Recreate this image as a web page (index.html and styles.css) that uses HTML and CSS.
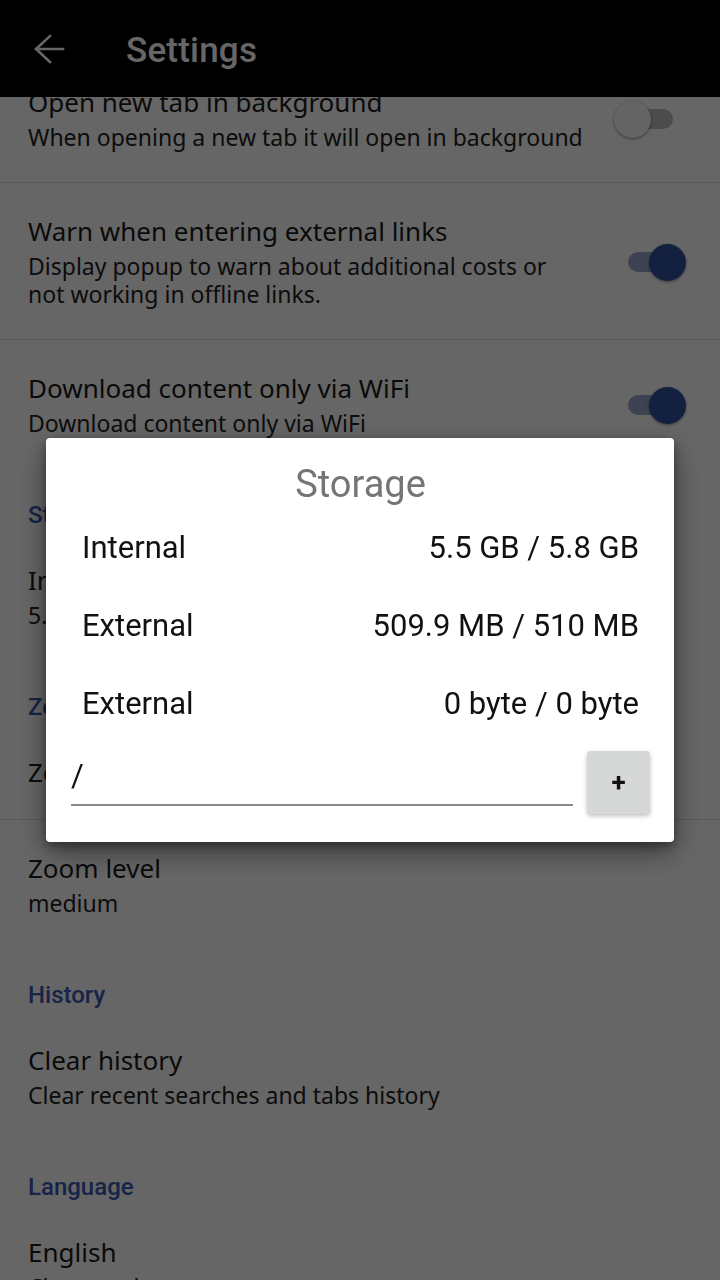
FILE: index.html
```html
<!DOCTYPE html>
<html lang="en">
<head>
<meta charset="utf-8">
<title>Settings</title>
<link rel="stylesheet" href="styles.css">
</head>
<body>
<div class="app">
  <header class="toolbar">
    <svg class="back" viewBox="0 0 40 40" width="40" height="40" aria-hidden="true">
      <path d="M21 6 L7 19 L21 32 M7 19 H34" fill="none" stroke="#fff" stroke-width="2.6" stroke-linecap="square" stroke-linejoin="miter"/>
    </svg>
    <h1 class="title">Settings</h1>
  </header>
  <main class="list">
    <div class="list-inner">
      <div class="item divided">
        <div class="text">
          <div class="item-title">Open new tab in background</div>
          <div class="item-summary">When opening a new tab it will open in background</div>
        </div>
        <div class="toggle"><span class="track"></span><span class="thumb"></span></div>
      </div>
      <div class="item divided">
        <div class="text">
          <div class="item-title">Warn when entering external links</div>
          <div class="item-summary">Display popup to warn about additional costs or not working in offline links.</div>
        </div>
        <div class="toggle on"><span class="track"></span><span class="thumb"></span></div>
      </div>
      <div class="item">
        <div class="text">
          <div class="item-title">Download content only via WiFi</div>
          <div class="item-summary">Download content only via WiFi</div>
        </div>
        <div class="toggle on"><span class="track"></span><span class="thumb"></span></div>
      </div>

      <div class="category">Storage</div>
      <div class="item">
        <div class="text">
          <div class="item-title">Internal</div>
          <div class="item-summary">5.5 GB / 5.8 GB</div>
        </div>
      </div>

      <div class="category">Zoom</div>
      <div class="item divided">
        <div class="text">
          <div class="item-title">Zoom</div>
        </div>
      </div>
      <div class="item">
        <div class="text">
          <div class="item-title">Zoom level</div>
          <div class="item-summary">medium</div>
        </div>
      </div>

      <div class="category">History</div>
      <div class="item">
        <div class="text">
          <div class="item-title">Clear history</div>
          <div class="item-summary">Clear recent searches and tabs history</div>
        </div>
      </div>

      <div class="category">Language</div>
      <div class="item">
        <div class="text">
          <div class="item-title">English</div>
          <div class="item-summary">Choose a language</div>
        </div>
      </div>
    </div>
  </main>
</div>

<div class="scrim">
  <div class="dialog" role="dialog" aria-label="Storage">
    <div class="dialog-title">Storage</div>
    <div class="row"><span>Internal</span><span>5.5 GB / 5.8 GB</span></div>
    <div class="row"><span>External</span><span>509.9 MB / 510 MB</span></div>
    <div class="row"><span>External</span><span>0 byte / 0 byte</span></div>
    <div class="input-row">
      <div class="input">/</div>
      <button class="add" type="button">+</button>
    </div>
  </div>
</div>
</body>
</html>
```

FILE: styles.css
```css
html, body {
  margin: 0;
  padding: 0;
}
body {
  width: 720px;
  height: 1280px;
  overflow: hidden;
  background: #ffffff;
  font-family: Roboto, "Noto Sans", "Liberation Sans", sans-serif;
  color: #1a1a1a;
}
.app {
  display: flex;
  flex-direction: column;
  height: 1280px;
}
.toolbar {
  flex: 0 0 97px;
  height: 97px;
  background: #000;
  display: flex;
  align-items: center;
  position: relative;
  z-index: 1;
}
.back {
  margin-left: 29px;
  margin-top: 2px;
  flex: 0 0 40px;
}
.title {
  margin: 3px 0 0 57px;
  font-size: 35px;
  font-weight: 500;
  color: #ffffff;
  letter-spacing: 0.2px;
}
.list {
  flex: 1;
  overflow: hidden;
}
.list-inner {
  margin-top: -43px;
}
.item {
  display: flex;
  align-items: center;
  padding: 32px 34px 31px 28px;
  gap: 29px;
  font-family: "Noto Sans", Roboto, sans-serif;
}
.item.divided {
  border-bottom: 1px solid #e0e0e0;
}
.text {
  flex: 1;
  min-width: 0;
}
.item-title {
  font-size: 26px;
  line-height: 32px;
  color: #1a1a1a;
}
.item-summary {
  margin-top: 5px;
  font-size: 23px;
  line-height: 28px;
  color: #222;
}
.category {
  padding: 35px 28px 5px;
  font-size: 24px;
  line-height: 24px;
  font-weight: 500;
  color: #3a5ab4;
}
.toggle {
  position: relative;
  flex: 0 0 72px;
  height: 36px;
  display: flex;
  align-items: center;
}
.track {
  margin-left: 14px;
  width: 45px;
  height: 20px;
  border-radius: 10px;
  background: #bdbdbd;
}
.thumb {
  position: absolute;
  left: 0;
  top: 0;
  width: 37px;
  height: 37px;
  border-radius: 50%;
  background: #fafafa;
  box-shadow: 0 1px 3px rgba(0, 0, 0, 0.45);
}
.toggle.on .track {
  background: #98a8d0;
}
.toggle.on .thumb {
  left: 35px;
  background: #30509e;
}

.scrim {
  position: fixed;
  inset: 0;
  background: rgba(0, 0, 0, 0.6);
  display: flex;
  align-items: center;
  justify-content: center;
  z-index: 5;
}
.dialog {
  width: 628px;
  box-sizing: border-box;
  background: #fff;
  border-radius: 4px;
  padding: 24px 24px 28px 25px;
  box-shadow: 0 10px 28px rgba(0, 0, 0, 0.45), 0 4px 10px rgba(0, 0, 0, 0.3);
  margin-top: -1px;
}
.dialog-title {
  text-align: center;
  font-size: 38px;
  line-height: 44px;
  color: #757575;
  margin-bottom: 3px;
}
.row {
  display: flex;
  justify-content: space-between;
  align-items: center;
  height: 78px;
  padding: 0 11px;
  font-size: 31px;
  color: #111;
}
.input-row {
  display: flex;
  align-items: flex-end;
  gap: 14px;
  margin-top: 8px;
}
.input {
  flex: 1;
  height: 52px;
  box-sizing: border-box;
  border-bottom: 2px solid #8a8a8a;
  font-size: 31px;
  line-height: 44px;
  padding-left: 0;
  color: #111;
  margin-bottom: 8px;
}
.add {
  flex: 0 0 63px;
  width: 63px;
  height: 63px;
  border: none;
  border-radius: 4px;
  background: #d6d7d7;
  box-shadow: 0 2px 4px rgba(0, 0, 0, 0.25);
  font-family: Roboto, "Noto Sans", sans-serif;
  font-size: 26px;
  font-weight: 700;
  color: #111;
  padding: 0;
}
```
